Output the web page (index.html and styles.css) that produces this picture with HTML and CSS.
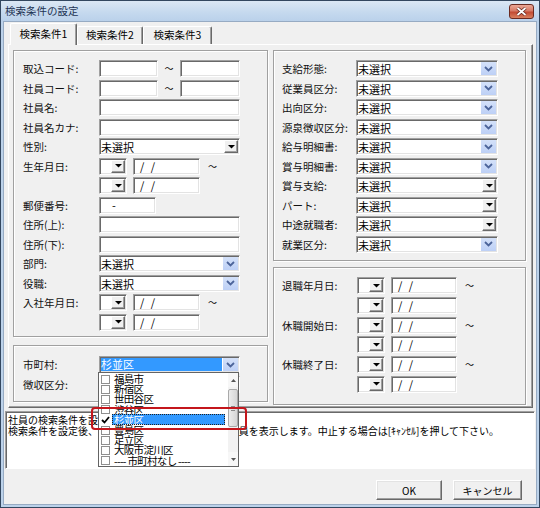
FILE: index.html
```html
<!DOCTYPE html>
<html lang="ja">
<head>
<meta charset="utf-8">
<title>検索条件の設定</title>
<link rel="stylesheet" href="styles.css">
</head>
<body>
<div class="window">
  <div class="titlebar">
    <span class="title">検索条件の設定</span>
    <span class="close"><svg width="11" height="9" viewBox="0 0 11 9"><path d="M1.5 1 L9.5 8 M9.5 1 L1.5 8" stroke="#5a1e16" stroke-width="3.2" fill="none"/><path d="M1.5 1 L9.5 8 M9.5 1 L1.5 8" stroke="#fff" stroke-width="1.8" fill="none"/></svg></span>
  </div>
  <div class="client">
    <div class="tabs">
      <div class="tab active t1">検索条件1</div>
      <div class="tab t2">検索条件2</div>
      <div class="tab t3">検索条件3</div>
    </div>
    <div class="panel">
      <div class="col colL">
        <div class="group gl1">
          <div class="form fl">
            <span class="lbl">取込コード:</span>
            <div class="fld"><span class="tb w59"></span><span class="tilde w22">～</span><span class="tb w60"></span></div>
            <span class="lbl">社員コード:</span>
            <div class="fld"><span class="tb w59"></span><span class="tilde w22">～</span><span class="tb w60"></span></div>
            <span class="lbl">社員名:</span>
            <div class="fld"><span class="tb w141"></span></div>
            <span class="lbl">社員名カナ:</span>
            <div class="fld"><span class="tb w141"></span></div>
            <span class="lbl">性別:</span>
            <div class="fld"><span class="cb w141"><span class="cbtxt">未選択</span><span class="clbtn"><svg width="7" height="4" viewBox="0 0 7 4"><polygon points="0,0 7,0 3.5,3.5" fill="#000"/></svg></span></span></div>
            <span class="lbl">生年月日:</span>
            <div class="fld"><span class="cb dcb"><span class="cbtxt"></span><span class="clbtn"><svg width="7" height="4" viewBox="0 0 7 4"><polygon points="0,0 7,0 3.5,3.5" fill="#000"/></svg></span></span><span class="tb date w67">/  /</span><span class="tilde2">～</span></div>
            <span class="lbl"></span>
            <div class="fld"><span class="cb dcb"><span class="cbtxt"></span><span class="clbtn"><svg width="7" height="4" viewBox="0 0 7 4"><polygon points="0,0 7,0 3.5,3.5" fill="#000"/></svg></span></span><span class="tb date w67">/  /</span></div>
            <span class="lbl">郵便番号:</span>
            <div class="fld"><span class="tb w57 zip">-</span></div>
            <span class="lbl">住所(上):</span>
            <div class="fld"><span class="tb w141"></span></div>
            <span class="lbl">住所(下):</span>
            <div class="fld"><span class="tb w141"></span></div>
            <span class="lbl">部門:</span>
            <div class="fld"><span class="cb w141"><span class="cbtxt">未選択</span><span class="xpbtn"><svg width="9" height="6" viewBox="0 0 9 6"><polyline points="1,1 4.5,4.5 8,1" fill="none" stroke="#4c649a" stroke-width="1.8"/></svg></span></span></div>
            <span class="lbl">役職:</span>
            <div class="fld"><span class="cb w141"><span class="cbtxt">未選択</span><span class="xpbtn"><svg width="9" height="6" viewBox="0 0 9 6"><polyline points="1,1 4.5,4.5 8,1" fill="none" stroke="#4c649a" stroke-width="1.8"/></svg></span></span></div>
            <span class="lbl">入社年月日:</span>
            <div class="fld"><span class="cb dcb"><span class="cbtxt"></span><span class="clbtn"><svg width="7" height="4" viewBox="0 0 7 4"><polygon points="0,0 7,0 3.5,3.5" fill="#000"/></svg></span></span><span class="tb date w67">/  /</span><span class="tilde2">～</span></div>
            <span class="lbl"></span>
            <div class="fld"><span class="cb dcb"><span class="cbtxt"></span><span class="clbtn"><svg width="7" height="4" viewBox="0 0 7 4"><polygon points="0,0 7,0 3.5,3.5" fill="#000"/></svg></span></span><span class="tb date w67">/  /</span></div>
          </div>
        </div>
        <div class="group gl2">
          <div class="form fl">
            <span class="lbl">市町村:</span>
            <div class="fld"><span class="cb w141"><span class="cbtxt"><span class="seltxt">杉並区</span></span><span class="xpbtn"><svg width="9" height="6" viewBox="0 0 9 6"><polyline points="1,1 4.5,4.5 8,1" fill="none" stroke="#4c649a" stroke-width="1.8"/></svg></span></span></div>
            <span class="lbl">徴収区分:</span>
            <div class="fld"><span class="cb w141"><span class="cbtxt"></span><span class="xpbtn"></span></span></div>
          </div>
        </div>
      </div>
      <div class="col colR">
        <div class="group gr1">
          <div class="form fr1">
            <span class="lbl">支給形態:</span>
            <div class="fld"><span class="cb w142"><span class="cbtxt">未選択</span><span class="xpbtn"><svg width="9" height="6" viewBox="0 0 9 6"><polyline points="1,1 4.5,4.5 8,1" fill="none" stroke="#4c649a" stroke-width="1.8"/></svg></span></span></div>
            <span class="lbl">従業員区分:</span>
            <div class="fld"><span class="cb w142"><span class="cbtxt">未選択</span><span class="xpbtn"><svg width="9" height="6" viewBox="0 0 9 6"><polyline points="1,1 4.5,4.5 8,1" fill="none" stroke="#4c649a" stroke-width="1.8"/></svg></span></span></div>
            <span class="lbl">出向区分:</span>
            <div class="fld"><span class="cb w142"><span class="cbtxt">未選択</span><span class="xpbtn"><svg width="9" height="6" viewBox="0 0 9 6"><polyline points="1,1 4.5,4.5 8,1" fill="none" stroke="#4c649a" stroke-width="1.8"/></svg></span></span></div>
            <span class="lbl">源泉徴収区分:</span>
            <div class="fld"><span class="cb w142"><span class="cbtxt">未選択</span><span class="xpbtn"><svg width="9" height="6" viewBox="0 0 9 6"><polyline points="1,1 4.5,4.5 8,1" fill="none" stroke="#4c649a" stroke-width="1.8"/></svg></span></span></div>
            <span class="lbl">給与明細書:</span>
            <div class="fld"><span class="cb w142"><span class="cbtxt">未選択</span><span class="xpbtn"><svg width="9" height="6" viewBox="0 0 9 6"><polyline points="1,1 4.5,4.5 8,1" fill="none" stroke="#4c649a" stroke-width="1.8"/></svg></span></span></div>
            <span class="lbl">賞与明細書:</span>
            <div class="fld"><span class="cb w142"><span class="cbtxt">未選択</span><span class="xpbtn"><svg width="9" height="6" viewBox="0 0 9 6"><polyline points="1,1 4.5,4.5 8,1" fill="none" stroke="#4c649a" stroke-width="1.8"/></svg></span></span></div>
            <span class="lbl">賞与支給:</span>
            <div class="fld"><span class="cb w142"><span class="cbtxt">未選択</span><span class="clbtn"><svg width="7" height="4" viewBox="0 0 7 4"><polygon points="0,0 7,0 3.5,3.5" fill="#000"/></svg></span></span></div>
            <span class="lbl">パート:</span>
            <div class="fld"><span class="cb w142"><span class="cbtxt">未選択</span><span class="clbtn"><svg width="7" height="4" viewBox="0 0 7 4"><polygon points="0,0 7,0 3.5,3.5" fill="#000"/></svg></span></span></div>
            <span class="lbl">中途就職者:</span>
            <div class="fld"><span class="cb w142"><span class="cbtxt">未選択</span><span class="clbtn"><svg width="7" height="4" viewBox="0 0 7 4"><polygon points="0,0 7,0 3.5,3.5" fill="#000"/></svg></span></span></div>
            <span class="lbl">就業区分:</span>
            <div class="fld"><span class="cb w142"><span class="cbtxt">未選択</span><span class="xpbtn"><svg width="9" height="6" viewBox="0 0 9 6"><polyline points="1,1 4.5,4.5 8,1" fill="none" stroke="#4c649a" stroke-width="1.8"/></svg></span></span></div>
          </div>
        </div>
        <div class="group gr2">
          <div class="form fr2">
            <span class="lbl">退職年月日:</span>
            <div class="fld"><span class="cb dcb"><span class="cbtxt"></span><span class="clbtn"><svg width="7" height="4" viewBox="0 0 7 4"><polygon points="0,0 7,0 3.5,3.5" fill="#000"/></svg></span></span><span class="tb date w66">/  /</span><span class="tilde2">～</span></div>
            <span class="lbl"></span>
            <div class="fld"><span class="cb dcb"><span class="cbtxt"></span><span class="clbtn"><svg width="7" height="4" viewBox="0 0 7 4"><polygon points="0,0 7,0 3.5,3.5" fill="#000"/></svg></span></span><span class="tb date w66">/  /</span></div>
            <span class="lbl">休職開始日:</span>
            <div class="fld"><span class="cb dcb"><span class="cbtxt"></span><span class="clbtn"><svg width="7" height="4" viewBox="0 0 7 4"><polygon points="0,0 7,0 3.5,3.5" fill="#000"/></svg></span></span><span class="tb date w66">/  /</span><span class="tilde2">～</span></div>
            <span class="lbl"></span>
            <div class="fld"><span class="cb dcb"><span class="cbtxt"></span><span class="clbtn"><svg width="7" height="4" viewBox="0 0 7 4"><polygon points="0,0 7,0 3.5,3.5" fill="#000"/></svg></span></span><span class="tb date w66">/  /</span></div>
            <span class="lbl">休職終了日:</span>
            <div class="fld"><span class="cb dcb"><span class="cbtxt"></span><span class="clbtn"><svg width="7" height="4" viewBox="0 0 7 4"><polygon points="0,0 7,0 3.5,3.5" fill="#000"/></svg></span></span><span class="tb date w66">/  /</span><span class="tilde2">～</span></div>
            <span class="lbl"></span>
            <div class="fld"><span class="cb dcb"><span class="cbtxt"></span><span class="clbtn"><svg width="7" height="4" viewBox="0 0 7 4"><polygon points="0,0 7,0 3.5,3.5" fill="#000"/></svg></span></span><span class="tb date w66">/  /</span></div>
          </div>
        </div>
      </div>
    </div>
    <div class="desc">
      <div>社員の検索条件を設定して下さい。</div>
      <div>検索条件を設定後、[OK]ボタンを押すと該当する社員を表示します。中止する場合は[ｷｬﾝｾﾙ]を押して下さい。</div>
    </div>
    <div class="btns">
      <span class="btn ok">OK</span>
      <span class="btn cancel">キャンセル</span>
    </div>

    <div class="dd">
      <div class="dd-items">
        <div class="it"><span class="chk"></span><span class="itx">福島市</span></div>
        <div class="it"><span class="chk"></span><span class="itx">新宿区</span></div>
        <div class="it"><span class="chk"></span><span class="itx">世田谷区</span></div>
        <div class="it"><span class="chk"></span><span class="itx">渋谷区</span></div>
        <div class="it sel"><span class="chkmark"><svg width="9" height="8" viewBox="0 0 9 8"><polyline points="1,4 3.5,6.5 8,1" fill="none" stroke="#000" stroke-width="1.8"/></svg></span><span class="itx">杉並区</span></div>
        <div class="it"><span class="chk"></span><span class="itx">豊島区</span></div>
        <div class="it"><span class="chk"></span><span class="itx">足立区</span></div>
        <div class="it"><span class="chk"></span><span class="itx">大阪市淀川区</span></div>
        <div class="it"><span class="chk"></span><span class="itx">---- 市町村なし ----</span></div>
      </div>
      <div class="sb">
        <span class="sb-up"><svg width="5" height="3" viewBox="0 0 5 3"><polygon points="0,3 5,3 2.5,0" fill="#555"/></svg></span>
        <span class="sb-thumb"><span class="grip"></span></span>
        <span class="sb-track"></span>
        <span class="sb-down"><svg width="5" height="3" viewBox="0 0 5 3"><polygon points="0,0 5,0 2.5,3" fill="#555"/></svg></span>
      </div>
    </div>
    <div class="annot"></div>
  </div>
</div>
</body>
</html>
```

FILE: styles.css
```css
* { box-sizing: border-box; }
html, body { margin: 0; padding: 0; }
body {
  width: 540px;
  height: 508px;
  overflow: hidden;
  font-family: "Noto Sans CJK JP", "Noto Sans", sans-serif;
  font-size: 10.5px;
  color: #000;
  background: #fff;
}
.window {
  width: 540px;
  height: 508px;
  border: 1px solid #33475f;
  background: #bcd2ea;
  display: flex;
  flex-direction: column;
}
.titlebar {
  height: 21px;
  flex: none;
  display: flex;
  align-items: center;
  padding-left: 4px;
  background: linear-gradient(#dbe7f4, #c5d9ee 55%, #b9d0ea);
}
.title {
  font-size: 10.5px;
  line-height: 1;
  color: #1e3353;
}
.close {
  margin-left: auto;
  margin-right: 5px;
  width: 25px;
  height: 15px;
  border: 1px solid #6b2a20;
  border-radius: 3px;
  background: linear-gradient(#eba796, #d67a66 45%, #c24a33 55%, #d9805f);
  display: flex;
  align-items: center;
  justify-content: center;
}
.client {
  position: relative;
  flex: none;
  height: 482px;
  margin: 0 3px;
  background: #f0f0f0;
  box-shadow: 0 0 0 1px #97abc3;
}

/* tabs */
.tabs {
  height: 22px;
  display: flex;
  align-items: flex-end;
  padding-left: 6px;
}
.tab {
  height: 18px;
  border-top: 1px solid #fff;
  border-left: 1px solid #fff;
  border-right: 1px solid #696969;
  box-shadow: inset -1px 0 0 #a0a0a0;
  border-radius: 2px 2px 0 0;
  display: flex;
  align-items: center;
  justify-content: center;
  font-size: 10.5px;
  line-height: 1;
  background: #f0f0f0;
}
.t1 { width: 67px; }
.t2 { width: 66px; }
.t3 { width: 69px; }
.tab.active {
  height: 22px;
  margin-bottom: -1px;
  position: relative;
  z-index: 1;
  padding-bottom: 1px;
}

.panel {
  margin-left: 4px;
  width: 525px;
  height: 364px;
  border: 1px solid;
  border-color: #fff #696969 #696969 #fff;
  box-shadow: inset -1px -1px 0 #a0a0a0;
  display: flex;
  gap: 5px;
  padding: 5px 0 0 4px;
}
.col { display: flex; flex-direction: column; }
.colL { width: 255px; gap: 8px; }
.colR { width: 253px; gap: 6px; }

.group {
  border: 1px solid #a0a0a0;
  box-shadow: inset 1px 1px 0 #fff, 1px 1px 0 #fff;
}
.gl1 { height: 287px; padding: 9px 0 0 9px; }
.gl2 { height: 57px; padding: 10px 0 0 9px; }
.gr1 { height: 211px; padding: 9px 0 0 8px; }
.gr2 { height: 138px; padding: 9px 0 0 8px; }

.form {
  display: grid;
  grid-auto-rows: 17px;
  row-gap: 2.5px;
  align-items: center;
}
.fl { grid-template-columns: 76px 141px; }
.fr1 { grid-template-columns: 74px 142px; }
.fr2 { grid-template-columns: 75px 130px; row-gap: 2.8px; }

.lbl {
  font-size: 10.5px;
  line-height: 17px;
  white-space: nowrap;
  color: #111;
}
.fld {
  display: flex;
  align-items: center;
  height: 17px;
}

/* sunken text box */
.tb, .cb {
  display: flex;
  height: 17px;
  background: #fff;
  border: 1px solid;
  border-color: #a0a0a0 #fff #fff #a0a0a0;
  box-shadow: inset 1px 1px 0 #696969, inset -1px -1px 0 #e3e3e3;
  font-size: 11px;
  line-height: 15px;
  white-space: pre;
  flex: none;
}
.w57 { width: 57px; }
.w59 { width: 59px; }
.w60 { width: 60px; }
.w66 { width: 66px; }
.w67 { width: 67px; }
.w141 { width: 141px; }
.w142 { width: 142px; }
.zip { padding-left: 12px; }
.date { margin-left: 6px; padding-left: 6px; letter-spacing: 0.5px; }
.tilde {
  text-align: center;
  font-size: 9px;
  line-height: 17px;
}
.w22 { width: 22px; }
.tilde2 {
  margin-left: 8px;
  font-size: 9px;
  line-height: 17px;
}

.cbtxt {
  flex: 1;
  padding-left: 1px;
  padding-top: 1px;
  overflow: hidden;
}
.seltxt {
  display: block;
  height: 13px;
  line-height: 13px;
  margin-right: 1px;
  background: #3399ff;
  color: #fff;
}
.xpbtn {
  width: 15px;
  margin: 1px 1px 1px 0;
  background: linear-gradient(#d4e1f9, #bdd0f6);
  display: flex;
  align-items: center;
  justify-content: center;
}
.clbtn {
  width: 14px;
  margin: 1px 1px 1px 0;
  background: #f0f0f0;
  border: 1px solid;
  border-color: #fff #696969 #696969 #fff;
  box-shadow: inset -1px -1px 0 #a0a0a0;
  display: flex;
  align-items: center;
  justify-content: center;
}
.dcb { width: 28px; }

/* description */
.desc {
  margin: 3px 1px 0;
  height: 58px;
  background: #fff;
  border: 1px solid;
  border-color: #a0a0a0 #fff #fff #a0a0a0;
  box-shadow: inset 1px 1px 0 #696969;
  padding: 2px 2px;
  font-size: 10px;
  line-height: 11px;
  white-space: nowrap;
}

/* buttons */
.btns {
  display: flex;
  justify-content: flex-end;
  gap: 11px;
  margin-top: 11px;
  padding-right: 14px;
}
.btn {
  height: 20px;
  border: 1px solid;
  border-color: #fff #696969 #696969 #fff;
  box-shadow: inset -1px -1px 0 #a0a0a0, inset 1px 1px 0 #e3e3e3;
  background: #f0f0f0;
  font-size: 10px;
  display: flex;
  align-items: center;
  justify-content: center;
}
.ok { width: 66px; }
.cancel { width: 69px; }

/* open dropdown list (overlay) */
.dd {
  position: absolute;
  left: 94px;
  top: 350px;
  width: 141px;
  height: 95px;
  background: #fff;
  border: 1px solid #646464;
  display: flex;
  z-index: 5;
}
.dd-items {
  flex: 1;
  position: relative;
  overflow: hidden;
  padding-top: 1px;
}
.it {
  height: 10.2px;
  display: flex;
  align-items: center;
  position: relative;
}
.chk {
  flex: none;
  width: 9px;
  height: 9px;
  margin-left: 2px;
  border: 1px solid #8f8f8f;
  background: #fff;
}
.chkmark {
  flex: none;
  width: 9px;
  height: 9px;
  margin-left: 2px;
  display: flex;
  align-items: center;
}
.itx {
  margin-left: 4px;
  font-size: 10.5px;
  letter-spacing: -0.7px;
  line-height: 10.2px;
  white-space: nowrap;
}
.it.sel { z-index: 1; }
.it.sel .itx {
  margin-left: 2px;
  padding-left: 2px;
  width: 113px;
  height: 11px;
  line-height: 11px;
  background: #3399ff;
  color: #fff;
  outline: 1px dotted #222;
  outline-offset: -1px;
}
.sb {
  width: 10px;
  flex: none;
  background: #f2f2f2;
  display: flex;
  flex-direction: column;
}
.sb-up, .sb-down {
  height: 14px;
  display: flex;
  align-items: center;
  justify-content: center;
  background: #f7f7f7;
}
.sb-thumb {
  height: 38px;
  margin-top: 2px;
  border: 1px solid #a9a9a9;
  border-radius: 2px;
  background: linear-gradient(90deg, #ececec, #d6d6d6);
  display: flex;
  align-items: center;
  justify-content: center;
}
.grip {
  width: 4px;
  height: 5px;
  border-top: 1px solid #8a8a8a;
  border-bottom: 1px solid #8a8a8a;
}
.sb-track { flex: 1; }

.annot {
  position: absolute;
  left: 87px;
  top: 385px;
  width: 156px;
  height: 23px;
  border: 2px solid #c4161c;
  border-radius: 4px;
  z-index: 6;
}
```
